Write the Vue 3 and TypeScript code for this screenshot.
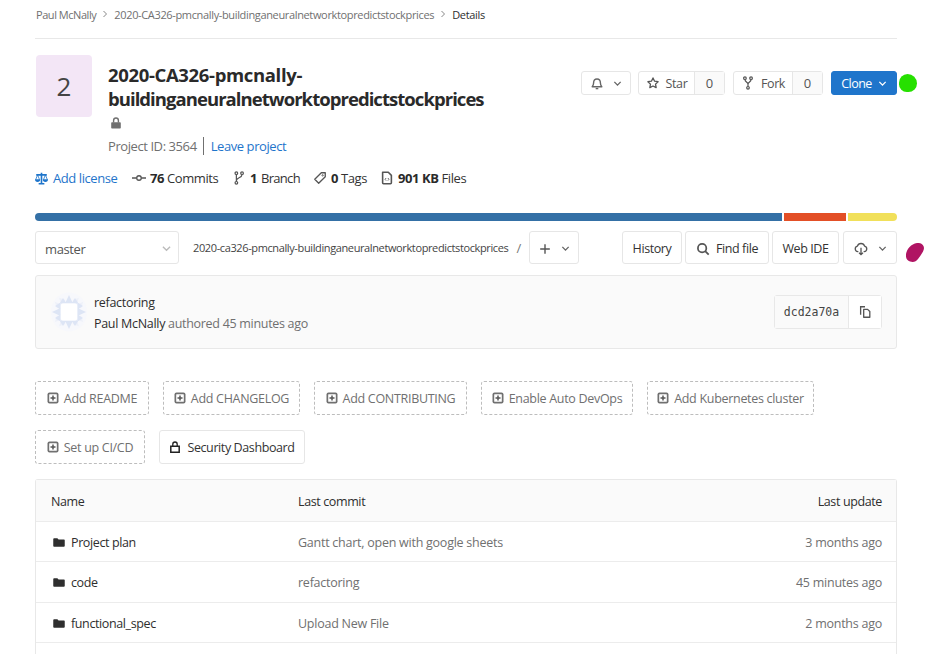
<script setup lang="ts">
const addButtons = [
  { label: 'Add README', width: 114 },
  { label: 'Add CHANGELOG', width: 137 },
  { label: 'Add CONTRIBUTING', width: 153 },
  { label: 'Enable Auto DevOps', width: 152 },
  { label: 'Add Kubernetes cluster', width: 167 },
]

const rows = [
  { name: 'Project plan', commit: 'Gantt chart, open with google sheets', updated: '3 months ago' },
  { name: 'code', commit: 'refactoring', updated: '45 minutes ago' },
  { name: 'functional_spec', commit: 'Upload New File', updated: '2 months ago' },
]

const clusters = [0, 90, 180, 270]
const corners = [45, 135, 225, 315]
</script>

<template>
  <div class="page">
    <nav class="crumbs">
      <span>Paul McNally</span>
      <svg class="sep" viewBox="0 0 8 8"><path d="M2.5 1l3 3-3 3" /></svg>
      <span class="crumb-path">2020-CA326-pmcnally-buildinganeuralnetworktopredictstockprices</span>
      <svg class="sep" viewBox="0 0 8 8"><path d="M2.5 1l3 3-3 3" /></svg>
      <span class="current">Details</span>
    </nav>

    <section class="project">
      <div class="avatar">2</div>
      <div class="project-info">
        <h1><span class="line-one">2020-CA326-pmcnally-</span><br /><span class="line-two">buildinganeuralnetworktopredictstockprices</span></h1>
        <svg class="lock" viewBox="0 0 12 12">
          <path d="M2 5.2h8a.8.8 0 0 1 .8.8v4.7a.8.8 0 0 1-.8.8H2a.8.8 0 0 1-.8-.8V6a.8.8 0 0 1 .8-.8z" fill="#707070" />
          <path d="M3.6 5.5V3.4a2.4 2.4 0 0 1 4.8 0v2.1" fill="none" stroke="#707070" stroke-width="1.4" />
        </svg>
        <div class="project-id">
          <span>Project ID: 3564</span>
          <a class="leave">Leave project</a>
        </div>
      </div>
      <div class="project-actions">
        <button class="btn bell">
          <svg class="ico" viewBox="0 0 16 16" fill="none" stroke="#666" stroke-width="1.6">
            <path d="M2.5 12.2c1-1 1.6-2 1.6-4.2 0-2.8 1.6-4.6 3.9-4.6s3.9 1.8 3.9 4.6c0 2.2.6 3.2 1.6 4.2z" stroke-linejoin="round" />
            <path d="M6.5 14.4h3" />
          </svg>
          <svg class="chev" viewBox="0 0 10 10"><path d="M1.5 3.2L5 6.8l3.5-3.6" /></svg>
        </button>
        <div class="count-group star">
          <button class="count-label">
            <svg class="ico" viewBox="0 0 16 16" fill="none" stroke="#555" stroke-width="1.5">
              <path d="M8 2.2l1.8 3.7 4 .6-2.9 2.8.7 4L8 11.4l-3.6 1.9.7-4-2.9-2.8 4-.6z" stroke-linejoin="round" />
            </svg>
            Star
          </button>
          <span class="count">0</span>
        </div>
        <div class="count-group fork">
          <button class="count-label">
            <svg class="ico" viewBox="0 0 16 16" fill="none" stroke="#555" stroke-width="1.4">
              <circle cx="4.5" cy="2.5" r="1.5" /><circle cx="11.5" cy="2.5" r="1.5" /><circle cx="8" cy="13.5" r="1.5" />
              <path d="M4.5 4c0 3 3.5 3 3.5 5v3M11.5 4c0 3-3.5 3-3.5 5" />
            </svg>
            Fork
          </button>
          <span class="count">0</span>
        </div>
        <button class="btn clone">
          Clone
          <svg class="chev white" viewBox="0 0 10 10"><path d="M1.5 3.2L5 6.8l3.5-3.6" /></svg>
        </button>
      </div>
    </section>

    <div class="stats">
      <a class="stat license">
        <svg class="ico-blue" viewBox="0 0 16 16">
          <path d="M1.5 3.5h13M8 1v13M4.5 14.5h7" fill="none" stroke="#1f75cb" stroke-width="2" />
          <path d="M3.2 3.5L.8 9.5M3.2 3.5l2.4 6M12.8 3.5l-2.4 6M12.8 3.5l2.4 6" fill="none" stroke="#1f75cb" stroke-width="1" />
          <path d="M0 9h6.4a3.2 3.2 0 0 1-6.4 0zM9.6 9H16a3.2 3.2 0 0 1-6.4 0z" fill="#1f75cb" />
        </svg>
        Add license
      </a>
      <span class="stat commits">
        <svg class="ico" viewBox="0 0 16 16" fill="none" stroke="#555" stroke-width="1.5">
          <circle cx="8" cy="8" r="2.6" /><path d="M0 8h5.3M10.7 8H16" />
        </svg>
        <b>76</b> Commits
      </span>
      <span class="stat branch">
        <svg class="ico" viewBox="0 0 16 16" fill="none" stroke="#555" stroke-width="1.4">
          <circle cx="5" cy="2.5" r="1.5" /><circle cx="11.5" cy="2.5" r="1.5" /><circle cx="5" cy="13.5" r="1.5" />
          <path d="M5 4v8M11.5 4c0 4-6.5 3.5-6.5 7" />
        </svg>
        <b>1</b><span class="tight">Branch</span>
      </span>
      <span class="stat tags">
        <svg class="ico" viewBox="0 0 16 16" fill="none" stroke="#555" stroke-width="1.5">
          <path d="M9.5 2H14v4.5L6.5 14 2 9.5z" stroke-linejoin="round" />
          <circle cx="11" cy="5" r="0.8" stroke-width="1" />
        </svg>
        <b>0</b> Tags
      </span>
      <span class="stat files">
        <svg class="ico" viewBox="0 0 16 16" fill="none" stroke="#555" stroke-width="1.8">
          <path d="M3 1.5h6.5L13 5v8.5a1 1 0 0 1-1 1H4a1 1 0 0 1-1-1z" stroke-linejoin="round" />
          <path d="M7 8L5.8 9.5 7 11M9 8l1.2 1.5L9 11" stroke-width="1" />
        </svg>
        <b>901 KB</b> Files
      </span>
    </div>

    <div class="lang-bar">
      <span class="lang blue"></span>
      <span class="lang orange"></span>
      <span class="lang yellow"></span>
    </div>

    <div class="toolbar">
      <div class="branch-select">
        <span>master</span>
        <svg class="chev light" viewBox="0 0 10 10"><path d="M1 3l4 4 4-4" /></svg>
      </div>
      <span class="repo-path">2020-ca326-pmcnally-buildinganeuralnetworktopredictstockprices</span>
      <span class="slash">/</span>
      <button class="btn plus">
        <svg class="ico" viewBox="0 0 16 16" fill="none" stroke="#555" stroke-width="1.6"><path d="M8 2.5v11M2.5 8h11" /></svg>
        <svg class="chev" viewBox="0 0 10 10"><path d="M1.5 3.2L5 6.8l3.5-3.6" /></svg>
      </button>
      <div class="toolbar-right">
        <button class="btn history">History</button>
        <button class="btn find">
          <svg class="ico" viewBox="0 0 16 16" fill="none" stroke="#555" stroke-width="2">
            <circle cx="7" cy="7" r="4.8" /><path d="M10.5 10.5l4 4" />
          </svg>
          Find file
        </button>
        <button class="btn ide">Web IDE</button>
        <button class="btn download">
          <svg class="ico" viewBox="0 0 16 16" fill="none" stroke="#555" stroke-width="1.5">
            <path d="M5 11h-.7a3.2 3.2 0 0 1-.4-6.3 4.3 4.3 0 0 1 8.2 0 3.2 3.2 0 0 1-.4 6.3H11" stroke-linejoin="round" />
            <path d="M8 6.500v8M5.800 12.300L8 14.500l2.200-2.200" />
          </svg>
          <svg class="chev" viewBox="0 0 10 10"><path d="M1.5 3.2L5 6.8l3.5-3.6" /></svg>
        </button>
      </div>
    </div>

    <div class="commit">
      <svg class="identicon" viewBox="0 0 36 40">
        <ellipse cx="18" cy="20" rx="18" ry="19.5" fill="#f7f8fc" />
        <g v-for="angle in corners" :key="angle" :transform="`rotate(${angle} 18 20)`">
          <path d="M15 3l3 6h-6zM21 3l3 6h-6z" fill="#eef1f9" />
        </g>
        <g v-for="angle in clusters" :key="angle" :transform="`rotate(${angle} 18 20)`">
          <path d="M12 6l3.5 5.5h-7zM18 3l4 8.5h-8zM24 6l3.5 5.5h-7z" fill="#dde5f5" />
        </g>
        <rect x="10" y="11.5" width="16" height="17" rx="2" fill="#fff" />
      </svg>
      <div class="commit-text">
        <div class="commit-title">refactoring</div>
        <div class="commit-meta"><span class="author">Paul McNally</span> authored 45 minutes ago</div>
      </div>
      <div class="hash">
        <span class="sha">dcd2a70a</span>
        <button class="copy">
          <svg class="ico" viewBox="0 0 16 16" fill="none" stroke="#555" stroke-width="1.5">
            <path d="M8 2H3v9" />
            <path d="M6.5 5H11l2.5 2.5V14h-7z" stroke-linejoin="round" />
          </svg>
        </button>
      </div>
    </div>

    <div class="shortcuts">
      <button v-for="item in addButtons" :key="item.label" class="shortcut" :style="{ width: item.width + 'px' }">
        <svg class="plus-box" viewBox="0 0 12 12">
          <rect x="0.5" y="0.5" width="11" height="11" rx="2" fill="#707070" />
          <rect x="2.2" y="2.2" width="7.6" height="7.6" rx="0.5" fill="#fff" />
          <path d="M6 3.5v5M3.5 6h5" stroke="#555" stroke-width="1.5" />
        </svg>
        {{ item.label }}
      </button>
    </div>
    <div class="shortcuts second">
      <button class="shortcut setup">
        <svg class="plus-box" viewBox="0 0 12 12">
          <rect x="0.5" y="0.5" width="11" height="11" rx="2" fill="#707070" />
          <rect x="2.2" y="2.2" width="7.6" height="7.6" rx="0.5" fill="#fff" />
          <path d="M6 3.5v5M3.5 6h5" stroke="#555" stroke-width="1.5" />
        </svg>
        Set up CI/CD
      </button>
      <button class="security">
        <svg class="sec-lock" viewBox="0 0 12 12">
          <path d="M1.8 5.2h8.4v6H1.8z" fill="none" stroke="#222" stroke-width="1.5" />
          <path d="M3.8 5V3.2a2.2 2.2 0 0 1 4.4 0V5" fill="none" stroke="#222" stroke-width="1.3" />
        </svg>
        Security Dashboard
      </button>
    </div>

    <div class="files-table">
      <div class="tr head">
        <span class="col-name">Name</span>
        <span class="col-commit">Last commit</span>
        <span class="col-date">Last update</span>
      </div>
      <div v-for="row in rows" :key="row.name" class="tr">
        <span class="col-name file">
          <svg class="folder" viewBox="0 0 14 12">
            <path d="M1.3 1h3.800l1.400 1.400h6.200c.5 0 1 .5 1 1V10c0 .6-.5 1-1 1H1.300c-.6 0-1-.4-1-1V2c0-.6.4-1 1-1z" fill="#2e2e2e" />
          </svg>
          {{ row.name }}
        </span>
        <span class="col-commit muted">{{ row.commit }}</span>
        <span class="col-date muted">{{ row.updated }}</span>
      </div>
    </div>

    <span class="blob green"></span>
    <svg class="blob magenta" viewBox="0 0 18 19">
      <path d="M0 11C1 6 5 1 11 0c4-.5 7 2 7 5 0 3-3 7-6 11-2 3-5 3.5-8 2.500C1 17.500-.5 15 0 11z" fill="#b01463" />
    </svg>
  </div>
</template>

<style>
html,
body {
  margin: 0;
  height: 654px;
  overflow: hidden;
  background: #fff;
}
</style>

<style scoped>
* {
  box-sizing: border-box;
}

.page {
  position: relative;
  width: 939px;
  height: 654px;
  overflow: hidden;
  padding: 0 42px 0 35px;
  font-family: "Open Sans", "Noto Sans", sans-serif;
  font-size: 13px;
  color: #2e2e2e;
}

button {
  font: inherit;
  color: inherit;
  background: #fff;
  cursor: pointer;
}

.crumbs {
  display: flex;
  align-items: center;
  height: 39px;
  padding: 0 0 10px 1px;
  border-bottom: 1px solid #e8e8e8;
  font-size: 11px;
  letter-spacing: -0.45px;
  color: #707070;
}

.crumb-path {
  letter-spacing: -0.35px;
}

.crumbs .current {
  color: #2e2e2e;
  letter-spacing: -0.3px;
}

.sep {
  width: 8px;
  height: 8px;
  margin: 0 5px;
  fill: none;
  stroke: #888;
}

.project {
  display: flex;
  height: 122px;
  padding: 16px 0 0 1px;
}

.avatar {
  width: 56px;
  height: 62px;
  margin-right: 16px;
  background: #f3e6f6;
  border-radius: 4px;
  display: flex;
  align-items: center;
  justify-content: center;
  font-size: 26px;
  color: #444;
}

.project-info {
  flex: 1;
  padding-top: 8px;
}

h1 {
  margin: 0;
  font-size: 18.5px;
  line-height: 24px;
  font-weight: 700;
  color: #2a2a2a;
}

.line-one {
  letter-spacing: -0.35px;
}

.line-two {
  letter-spacing: -0.95px;
}

.lock {
  display: block;
  width: 12px;
  height: 12px;
  margin: 6px 0 0 2px;
}

.project-id {
  display: flex;
  align-items: center;
  height: 18px;
  margin-top: 8px;
  font-size: 13px;
  letter-spacing: -0.42px;
  color: #707070;
}

.leave {
  margin-left: 6px;
  padding-left: 7px;
  border-left: 1px solid #707070;
  color: #1f75cb;
}

.project-actions {
  display: flex;
  align-items: flex-start;
  padding-top: 16px;
  gap: 7px;
  margin-left: -60px;
}

.btn {
  height: 24px;
  display: flex;
  align-items: center;
  justify-content: center;
  border: 1px solid #e6e6e6;
  border-radius: 3px;
  padding: 0;
  letter-spacing: -0.4px;
  font-size: 12.5px;
  color: #333;
}

.ico {
  width: 14px;
  height: 14px;
  flex: none;
}

.chev {
  width: 9px;
  height: 9px;
  flex: none;
  fill: none;
  stroke: #666;
  stroke-width: 1.5;
}

.chev.white {
  stroke: #fff;
  margin-left: 6px;
}

.chev.light {
  stroke: #bbb;
}

.bell {
  width: 50px;
  gap: 9px;
}

.count-group {
  display: flex;
  height: 24px;
  border: 1px solid #e6e6e6;
  border-radius: 3px;
}

.count-group.star {
  width: 87px;
}

.count-group.fork {
  width: 90px;
  margin-left: 1px;
}

.count-label {
  flex: 1;
  display: flex;
  align-items: center;
  justify-content: center;
  gap: 6px;
  border: 0;
  border-right: 1px solid #e6e6e6;
  background: transparent;
  padding: 0;
  font-size: 12.5px;
  letter-spacing: -0.4px;
  color: #555;
}

.count {
  width: 29px;
  display: flex;
  align-items: center;
  justify-content: center;
  background: #fafafa;
  font-size: 13px;
  color: #555;
}

.clone {
  width: 66px;
  margin-left: 1px;
  background: #1f75cb;
  border-color: #1f75cb;
  color: #fff;
  letter-spacing: -0.55px;
}

.stats {
  display: flex;
  align-items: center;
  height: 20px;
  margin-top: 7px;
  letter-spacing: -0.42px;
  font-size: 13px;
}

.stat {
  display: flex;
  align-items: center;
  white-space: pre;
  color: #333;
}

.stat b {
  font-weight: 700;
  margin-left: 4px;
  color: #2a2a2a;
}

.tight {
  margin-left: 4px;
  letter-spacing: -0.7px;
}

.license {
  width: 97px;
  color: #1f75cb;
  gap: 2px;
}

.ico-blue {
  width: 13px;
  height: 13px;
  flex: none;
}

.commits {
  width: 100px;
}

.branch {
  width: 81px;
}

.tags {
  width: 67px;
}

.lang-bar {
  display: flex;
  gap: 2px;
  height: 8px;
  margin-top: 25px;
}

.lang {
  display: block;
  height: 8px;
}

.lang.blue {
  width: 747px;
  background: #3470a6;
  border-radius: 4px 0 0 4px;
}

.lang.orange {
  width: 62px;
  background: #e34f26;
}

.lang.yellow {
  flex: 1;
  background: #f1e05a;
  border-radius: 0 4px 4px 0;
}

.toolbar {
  display: flex;
  align-items: center;
  height: 33px;
  margin-top: 10px;
}

.toolbar .btn {
  height: 33px;
  padding-top: 2px;
}

.branch-select {
  width: 144px;
  height: 33px;
  display: flex;
  align-items: center;
  justify-content: space-between;
  padding: 2px 7px 0 9px;
  border: 1px solid #e6e6e6;
  border-radius: 3px;
  letter-spacing: -0.4px;
  color: #555;
}

.repo-path {
  margin-left: 14px;
  font-size: 11px;
  letter-spacing: -0.38px;
  color: #444;
}

.slash {
  margin-left: 8px;
  color: #777;
}

.plus {
  width: 50px;
  margin-left: 8px;
  gap: 9px;
}

.toolbar-right {
  margin-left: auto;
  display: flex;
  gap: 3px;
}

.history {
  width: 60px;
}

.find {
  width: 84px;
  gap: 6px;
}

.ide {
  width: 67px;
}

.download {
  width: 54px;
  margin-left: 1px;
  gap: 10px;
}

.commit {
  display: flex;
  align-items: center;
  height: 74px;
  margin-top: 11px;
  padding: 0 14px 0 15px;
  background: #fafafa;
  border: 1px solid #e8e8e8;
  border-radius: 3px;
}

.identicon {
  width: 36px;
  height: 40px;
  margin-right: 7px;
}

.commit-text {
  flex: 1;
  padding-top: 2px;
  font-size: 12.5px;
  line-height: 21px;
  letter-spacing: -0.3px;
  color: #707070;
}

.commit-title,
.author {
  color: #2e2e2e;
}

.hash {
  display: flex;
  height: 34px;
  border: 1px solid #e8e8e8;
  border-radius: 3px;
}

.sha {
  width: 74px;
  display: flex;
  align-items: center;
  justify-content: center;
  font-family: "DejaVu Sans Mono", "Liberation Mono", monospace;
  font-size: 11.5px;
  background: #fafafa;
  border-right: 1px solid #e8e8e8;
  color: #444;
}

.copy {
  width: 32px;
  border: 0;
  padding: 0;
  display: flex;
  align-items: center;
  justify-content: center;
}

.shortcuts {
  display: flex;
  gap: 14px;
  margin-top: 32px;
}

.shortcuts.second {
  margin-top: 15px;
}

.shortcut,
.security {
  height: 34px;
  display: flex;
  align-items: center;
  justify-content: center;
  gap: 5px;
  padding: 0;
  font-size: 12.5px;
  letter-spacing: -0.3px;
  border-radius: 3px;
  white-space: nowrap;
}

.shortcut {
  border: 1px dashed #bdbdbd;
  color: #707070;
}

.shortcut.setup {
  width: 110px;
}

.plus-box {
  width: 12px;
  height: 12px;
  flex: none;
}

.security {
  width: 146px;
  gap: 6px;
  border: 1px solid #e6e6e6;
  color: #333;
  letter-spacing: -0.4px;
}

.sec-lock {
  width: 12px;
  height: 12px;
}

.files-table {
  margin-top: 15px;
  height: 200px;
  border: 1px solid #e8e8e8;
  border-bottom: 0;
  border-radius: 3px 3px 0 0;
}

.tr {
  display: flex;
  align-items: center;
  height: 40.3px;
  padding: 2px 14px 0 15px;
  border-bottom: 1px solid #ececec;
  font-size: 12.5px;
  letter-spacing: -0.38px;
}

.tr.head {
  height: 42px;
  background: #fafafa;
}

.col-name {
  width: 247px;
  display: flex;
  align-items: center;
  gap: 6px;
}

.file {
  padding-left: 2px;
}

.folder {
  width: 12px;
  height: 11px;
  flex: none;
}

.col-commit {
  flex: 1;
}

.col-date {
  text-align: right;
}

.muted {
  color: #707070;
  letter-spacing: -0.25px;
}

.blob {
  position: absolute;
  display: block;
}

.green {
  left: 899px;
  top: 74px;
  width: 18px;
  height: 18px;
  background: #26e000;
  border-radius: 50% 55% 50% 45%;
}

.magenta {
  left: 906px;
  top: 243px;
  width: 18px;
  height: 19px;
}
</style>
